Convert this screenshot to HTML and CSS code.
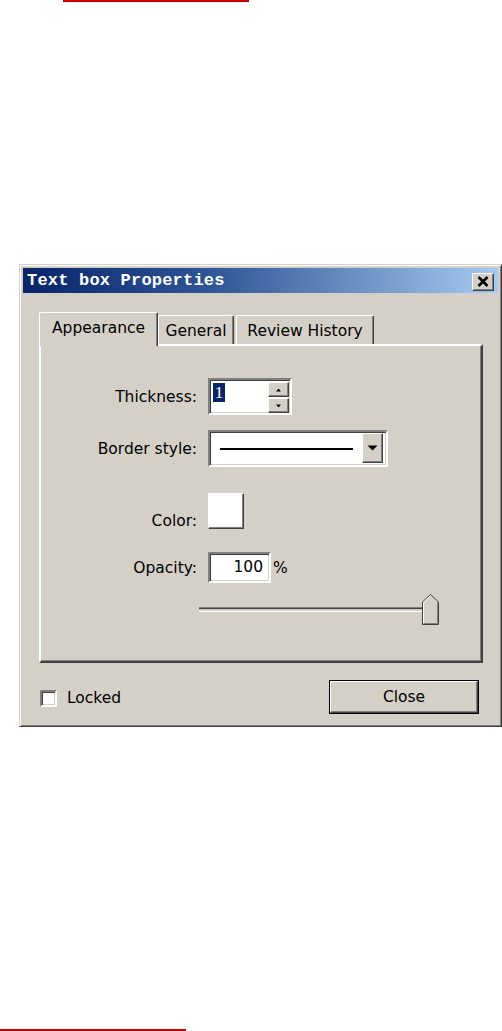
FILE: index.html
```html
<!DOCTYPE html>
<html lang="en">
<head>
<meta charset="utf-8">
<title>Text box Properties</title>
<link rel="stylesheet" href="styles.css">
</head>
<body>
<div class="rule rule-top"></div>

<div class="dialog">
  <div class="titlebar">
    <span class="title">Text box Properties</span>
    <div class="xbtn">
      <svg width="20" height="16" viewBox="0 0 20 16"><path d="M5.5 3 L14.5 12 M14.5 3 L5.5 12" stroke="#000" stroke-width="2.6" fill="none"/></svg>
    </div>
  </div>

  <div class="client">
    <div class="tabs">
      <div class="tab tab-active tab-appearance">Appearance</div>
      <div class="tab tab-general">General</div>
      <div class="tab tab-history">Review History</div>
    </div>

    <div class="panel">
      <div class="row row-thickness">
        <label class="lbl">Thickness:</label>
        <div class="field sunken spin">
          <div class="spin-text"><span class="sel">1</span></div>
          <div class="spin-btns">
            <div class="sbtn raised"><svg width="7" height="4" viewBox="0 0 7 4"><path d="M3.5 0.5 L6 3.5 L1 3.5 Z" fill="#000"/></svg></div>
            <div class="sbtn raised"><svg width="7" height="4" viewBox="0 0 7 4"><path d="M1 0.5 L6 0.5 L3.5 3.5 Z" fill="#000"/></svg></div>
          </div>
        </div>
      </div>

      <div class="row row-border">
        <label class="lbl">Border style:</label>
        <div class="field sunken combo">
          <div class="combo-value"><span class="solid-line"></span></div>
          <div class="dropbtn raised"><svg width="11" height="6" viewBox="0 0 11 6"><path d="M0.5 0.5 L10.5 0.5 L5.5 5.5 Z" fill="#000"/></svg></div>
        </div>
      </div>

      <div class="row row-color">
        <label class="lbl">Color:</label>
        <div class="swatch raised"></div>
      </div>

      <div class="row row-opacity">
        <label class="lbl">Opacity:</label>
        <div class="field sunken opacity">100</div>
        <span class="pct">%</span>
      </div>

      <div class="row row-slider">
        <div class="track"></div>
        <svg class="thumb" width="17" height="31" viewBox="0 0 17 31">
          <path d="M0.5 30.5 L0.5 8 L8.5 0.5 L16.5 8 L16.5 30.5 Z" fill="#d4d0c8" stroke="#404040" stroke-width="1"/>
          <path d="M1.5 29.5 L1.5 8.4 L8.5 1.9" fill="none" stroke="#fff" stroke-width="1"/>
          <path d="M15.5 8.4 L15.5 29.5 L1.5 29.5" fill="none" stroke="#808080" stroke-width="1"/>
        </svg>
      </div>
    </div>

    <div class="footer">
      <div class="check">
        <span class="box sunken"></span>
        <span class="check-label">Locked</span>
      </div>
      <div class="btn-close">
        <div class="btn-face raised">Close</div>
      </div>
    </div>
  </div>
</div>

<div class="rule rule-bottom"></div>
</body>
</html>
```

FILE: styles.css
```css
html, body {
  margin: 0;
  padding: 0;
  background: #ffffff;
}

body {
  font-family: "DejaVu Sans", "Liberation Sans", sans-serif;
  font-size: 15.5px;
  color: #000;
  width: 502px;
  height: 1031px;
  overflow: hidden;
}

.rule {
  height: 2px;
  background: #cc0000;
}

.rule-top {
  margin-left: 63px;
  width: 186px;
}

.rule-bottom {
  margin-top: 302px;
  width: 186px;
}

/* ---------- dialog frame ---------- */
.dialog {
  margin: 262px 0 0 19px;
  width: 483px;
  height: 463px;
  box-sizing: border-box;
  background: #d4d0c8;
  border: 1px solid;
  border-color: #d4d0c8 #404040 #404040 #d4d0c8;
  box-shadow: inset 1px 1px 0 #fff, inset -1px -1px 0 #808080;
  padding: 3px;
  display: flex;
  flex-direction: column;
}

.titlebar {
  height: 25px;
  flex: none;
  background: linear-gradient(90deg, #0a246a 0%, #2f5797 40%, #a6caf0 100%);
  display: flex;
  align-items: flex-start;
  justify-content: space-between;
  padding: 0 4px;
}

.title {
  font-family: "Liberation Mono", "DejaVu Sans Mono", monospace;
  font-weight: bold;
  font-size: 17px;
  letter-spacing: 0.2px;
  line-height: 26px;
  color: #fff;
}

.xbtn {
  margin-top: 5px;
  width: 22px;
  height: 18px;
  box-sizing: border-box;
  background: #d4d0c8;
  border: 1px solid;
  border-color: #fff #404040 #404040 #fff;
  box-shadow: inset -1px -1px 0 #808080;
  display: flex;
  align-items: center;
  justify-content: center;
}

/* ---------- bevels ---------- */
.sunken {
  box-sizing: border-box;
  border: 2px solid;
  border-color: #808080 #fff #fff #808080;
  box-shadow: inset 1px 1px 0 #404040, inset -1px -1px 0 #d4d0c8;
  background: #fff;
}

.raised {
  box-sizing: border-box;
  background: #d4d0c8;
  border: 1px solid;
  border-color: #fff #404040 #404040 #fff;
  box-shadow: inset -1px -1px 0 #808080;
}

/* ---------- client area ---------- */
.client {
  flex: 1;
  display: flex;
  flex-direction: column;
  padding: 19px 15px 0 16px;
}

.tabs {
  display: flex;
  align-items: flex-end;
  height: 32px;
  position: relative;
  z-index: 1;
}

.tab {
  box-sizing: border-box;
  height: 29px;
  border-left: 1px solid #fff;
  border-top: 1px solid #fff;
  border-right: 1px solid #404040;
  box-shadow: inset -1px 0 0 #808080;
  border-radius: 2px 2px 0 0;
  background: #d4d0c8;
  line-height: 30px;
  text-align: center;
  white-space: nowrap;
}

.tab-active {
  height: 34px;
  margin-bottom: -2px;
  line-height: 31px;
}

.tab-appearance { width: 119px; }
.tab-general { width: 76px; }
.tab-history { width: 138px; margin-left: 2px; }

.panel {
  height: 319px;
  box-sizing: border-box;
  border: 2px solid;
  border-color: #fff #404040 #404040 #fff;
  box-shadow: inset -1px -1px 0 #808080;
  padding-top: 32px;
}

.row {
  display: flex;
  align-items: center;
}

.lbl {
  width: 156px;
  margin-right: 11px;
  text-align: right;
  line-height: 18px;
  white-space: nowrap;
}

/* thickness */
.row-thickness { height: 37px; }

.spin {
  width: 84px;
  height: 37px;
  display: flex;
  padding: 0 1px 0 0;
}

.spin-text {
  flex: 1;
  padding: 3px 0 0 3px;
}

.sel {
  display: inline-block;
  background: #0a246a;
  color: #fff;
  width: 12px;
  height: 19px;
  line-height: 19px;
  text-align: center;
  font-family: "Liberation Serif", "DejaVu Serif", serif;
  font-size: 17px;
}

.spin-btns {
  width: 21px;
  padding-top: 2px;
  display: flex;
  flex-direction: column;
  gap: 1px;
}

.sbtn {
  height: 15px;
  display: flex;
  align-items: center;
  justify-content: center;
}

/* border style */
.row-border { margin-top: 15px; height: 37px; }

.combo {
  width: 180px;
  height: 37px;
  display: flex;
  align-items: center;
  padding-right: 3px;
}

.combo-value {
  flex: 1;
  display: flex;
  align-items: center;
  padding-left: 10px;
}

.solid-line {
  display: block;
  width: 133px;
  height: 2px;
  background: #000;
}

.dropbtn {
  width: 21px;
  height: 30px;
  margin-top: -1px;
  display: flex;
  align-items: center;
  justify-content: center;
}

/* color */
.row-color { margin-top: 26px; height: 36px; }
.row-color .lbl { align-self: flex-end; margin-bottom: -1px; }

.swatch {
  width: 36px;
  height: 36px;
  background: #fff;
}

/* opacity */
.row-opacity { margin-top: 23px; height: 31px; }

.opacity {
  width: 63px;
  height: 31px;
  text-align: right;
  padding-right: 6px;
  line-height: 27px;
}

.pct {
  margin-left: 2px;
}

/* slider */
.row-slider {
  margin-top: 11px;
  height: 31px;
  padding-left: 158px;
}

.track {
  width: 224px;
  height: 5px;
  box-sizing: border-box;
  border-top: 1px solid #808080;
  border-bottom: 1px solid #fff;
  background: #404040;
  box-shadow: inset 0 -2px 0 #d4d0c8;
}

.thumb {
  display: block;
  margin-left: -1px;
}

/* footer */
.footer {
  margin-top: 17px;
  display: flex;
  align-items: flex-start;
  justify-content: space-between;
  padding: 0 4px 0 1px;
}

.check {
  display: flex;
  align-items: center;
  margin-top: 9px;
}

.box {
  width: 17px;
  height: 17px;
}

.check-label {
  margin-left: 10px;
}

.btn-close {
  width: 150px;
  height: 34px;
  box-sizing: border-box;
  border: 1px solid #000;
}

.btn-face {
  height: 100%;
  display: flex;
  align-items: center;
  justify-content: center;
}
```
